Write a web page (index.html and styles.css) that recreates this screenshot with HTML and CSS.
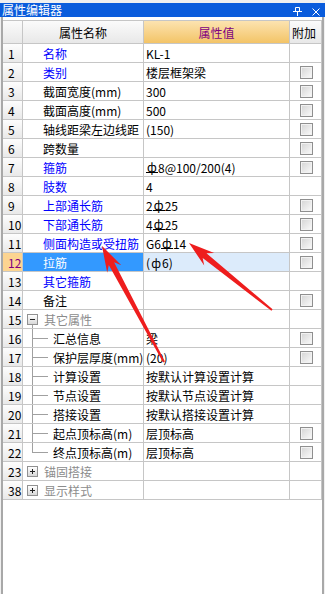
FILE: index.html
```html
<!DOCTYPE html>
<html lang="zh-CN">
<head>
    <meta charset="UTF-8">
    <meta name="viewport" content="width=device-width, initial-scale=1.0">
    <title>属性编辑器</title>
    <link rel="stylesheet" href="styles.css">
</head>
<body>
    <div class="window">
        <div class="titlebar">
            <span class="title">属性编辑器</span>
            <span class="tools">
                <svg width="9" height="9" viewBox="0 0 9 9"><path d="M2.5 0.5h4v4h-4zM0 4.5h9M4.5 4.5v4.5" fill="none" stroke="#fff" stroke-width="1"/></svg>
                <svg width="8" height="8" viewBox="0 0 8 8"><path d="M0.5 0.5l7 7M7.5 0.5l-7 7" fill="none" stroke="#fff" stroke-width="1"/></svg>
            </span>
        </div>
        <div class="panel">
            <div class="grid">
                <div class="hd"></div>
                <div class="hd">属性名称</div>
                <div class="hd hd-val">属性值</div>
                <div class="hd hd-add">附加</div>

                <div class="no">1</div><div class="name link">名称</div><div class="val">KL-1</div><div class="add"></div>
                <div class="no">2</div><div class="name link">类别</div><div class="val">楼层框架梁</div><div class="add"><span class="chk"></span></div>
                <div class="no">3</div><div class="name">截面宽度(mm)</div><div class="val">300</div><div class="add"><span class="chk"></span></div>
                <div class="no">4</div><div class="name">截面高度(mm)</div><div class="val">500</div><div class="add"><span class="chk"></span></div>
                <div class="no">5</div><div class="name">轴线距梁左边线距</div><div class="val">(150)</div><div class="add"><span class="chk"></span></div>
                <div class="no">6</div><div class="name">跨数量</div><div class="val"></div><div class="add"><span class="chk"></span></div>
                <div class="no">7</div><div class="name link">箍筋</div><div class="val"><span class="c3">ф</span>8@100/200(4)</div><div class="add"><span class="chk"></span></div>
                <div class="no">8</div><div class="name link">肢数</div><div class="val">4</div><div class="add"></div>
                <div class="no">9</div><div class="name link">上部通长筋</div><div class="val">2<span class="c3">ф</span>25</div><div class="add"><span class="chk"></span></div>
                <div class="no">10</div><div class="name link">下部通长筋</div><div class="val">4<span class="c3">ф</span>25</div><div class="add"><span class="chk"></span></div>
                <div class="no">11</div><div class="name link">侧面构造或受扭筋</div><div class="val">G6<span class="c3">ф</span>14</div><div class="add"><span class="chk"></span></div>
                <div class="no current">12</div><div class="name selected">拉筋</div><div class="val editing">(<span class="c1">ф</span>6)</div><div class="add"><span class="chk"></span></div>
                <div class="no">13</div><div class="name link">其它箍筋</div><div class="val"></div><div class="add"></div>
                <div class="no">14</div><div class="name">备注</div><div class="val"></div><div class="add"><span class="chk"></span></div>

                <div class="no">15</div><div class="name group open"><span class="tog minus"></span>其它属性</div><div class="val"></div><div class="add"></div>
                <div class="no">16</div><div class="name child">汇总信息</div><div class="val">梁</div><div class="add"><span class="chk"></span></div>
                <div class="no">17</div><div class="name child">保护层厚度(mm)</div><div class="val">(20)</div><div class="add"><span class="chk"></span></div>
                <div class="no">18</div><div class="name child">计算设置</div><div class="val">按默认计算设置计算</div><div class="add"></div>
                <div class="no">19</div><div class="name child">节点设置</div><div class="val">按默认节点设置计算</div><div class="add"></div>
                <div class="no">20</div><div class="name child">搭接设置</div><div class="val">按默认搭接设置计算</div><div class="add"></div>
                <div class="no">21</div><div class="name child">起点顶标高(m)</div><div class="val">层顶标高</div><div class="add"><span class="chk"></span></div>
                <div class="no">22</div><div class="name child last">终点顶标高(m)</div><div class="val">层顶标高</div><div class="add"><span class="chk"></span></div>

                <div class="no">23</div><div class="name group"><span class="tog plus"></span>锚固搭接</div><div class="val"></div><div class="add"></div>
                <div class="no">38</div><div class="name group"><span class="tog plus"></span>显示样式</div><div class="val"></div><div class="add"></div>
            </div>
        </div>
    </div>

    <!-- annotation arrows drawn on top of the screenshot -->
    <svg class="marks" width="325" height="594" viewBox="0 0 325 594">
        <polygon points="102,246 121.3,265.2 114.1,262.2 164.9,361.5 163.1,362.5 108.8,265.1 107.2,272.7" fill="#ee1d1d"/>
        <polygon points="189,243 214.2,253.1 206.5,253.3 272.6,309.2 271.4,310.8 202.7,257.9 204.2,265.5" fill="#ee1d1d"/>
    </svg>
</body>
</html>
```

FILE: styles.css
```css
* {
    box-sizing: border-box;
}
body {
    margin: 0;
    position: relative;
    font-family: "Noto Sans CJK SC", "DejaVu Sans", sans-serif;
    font-size: 12px;
    color: #000;
    background: #fff;
}
.window {
    width: 325px;
    height: 594px;
    display: flex;
    flex-direction: column;
    padding-top: 3px;
    background: #f0f0f0;
}
.titlebar {
    height: 14px;
    display: flex;
    align-items: center;
    padding-left: 2px;
    background: #0a5cdc;
    color: #fff;
    line-height: 14px;
}
.title {
    font-size: 12px;
}
.tools {
    margin-left: auto;
    display: flex;
    align-items: flex-end;
    gap: 10px;
    padding: 3px 5px 0 0;
}
.tools svg {
    display: block;
}
.panel {
    flex: 1;
    margin: 0 1px;
    padding-top: 3px;
    border-left: 2px solid #a8a8a8;
    border-right: 2px solid #a8a8a8;
    background: #fff;
}
.grid {
    display: grid;
    grid-template-columns: 20px 121px 146px 32px;
    grid-template-rows: 23px;
    grid-auto-rows: 19px;
    border-top: 1px solid #c6c6c6;
}
.grid > div {
    display: flex;
    align-items: center;
    white-space: nowrap;
    overflow: hidden;
    border-right: 1px solid #c6c6c6;
    border-bottom: 1px solid #c6c6c6;
}
.hd {
    justify-content: center;
    background: linear-gradient(#fbfbfb, #e8e8e8);
}
.hd-val {
    color: #800080;
    background: linear-gradient(#fce3b0, #f3c467);
}
.hd-add {
    justify-content: flex-start;
    padding-left: 2px;
}
.no {
    padding-left: 5px;
    background: linear-gradient(#fdfdfd, #e9e9e9);
}
.no.current {
    color: #800080;
    background: #fcd491;
}
.name {
    padding-left: 20px;
}
.link {
    color: #0000ff;
}
.selected {
    background: #3399ff;
    color: #fff;
}
.val {
    padding-left: 2px;
}
.editing {
    background: #dcebfb;
}
.c1,
.c3 {
    display: inline-block;
    width: 12px;
    text-align: center;
    line-height: 11px;
}
.c3 {
    border-bottom: 1px solid #000;
}
.group {
    padding-left: 4px;
    color: #8c8c8c;
}
.group.open {
    background: linear-gradient(#a0a0a0, #a0a0a0) no-repeat 9px 15px / 1px 4px;
}
.tog {
    width: 11px;
    height: 11px;
    margin-right: 6px;
    border: 1px solid #919191;
}
.minus {
    background:
        linear-gradient(#222, #222) no-repeat center / 5px 1px,
        linear-gradient(#ffffff, #d8d8d8);
}
.plus {
    background:
        linear-gradient(#222, #222) no-repeat center / 5px 1px,
        linear-gradient(#222, #222) no-repeat center / 1px 5px,
        linear-gradient(#ffffff, #d8d8d8);
}
.child {
    padding-left: 30px;
    background:
        linear-gradient(#a0a0a0, #a0a0a0) no-repeat 9px 0 / 1px 100%,
        linear-gradient(#a0a0a0, #a0a0a0) no-repeat 9px 9px / 16px 1px;
}
.child.last {
    background:
        linear-gradient(#a0a0a0, #a0a0a0) no-repeat 9px 0 / 1px 10px,
        linear-gradient(#a0a0a0, #a0a0a0) no-repeat 9px 9px / 16px 1px;
}
.chk {
    width: 13px;
    height: 13px;
    margin-left: 10px;
    border: 1px solid #8f8f8f;
    background: linear-gradient(135deg, #d4d4d4, #fbfbfb);
    box-shadow: inset 0 0 0 1px #f2f2f2;
}
.marks {
    position: absolute;
    top: 0;
    left: 0;
    pointer-events: none;
}
```
